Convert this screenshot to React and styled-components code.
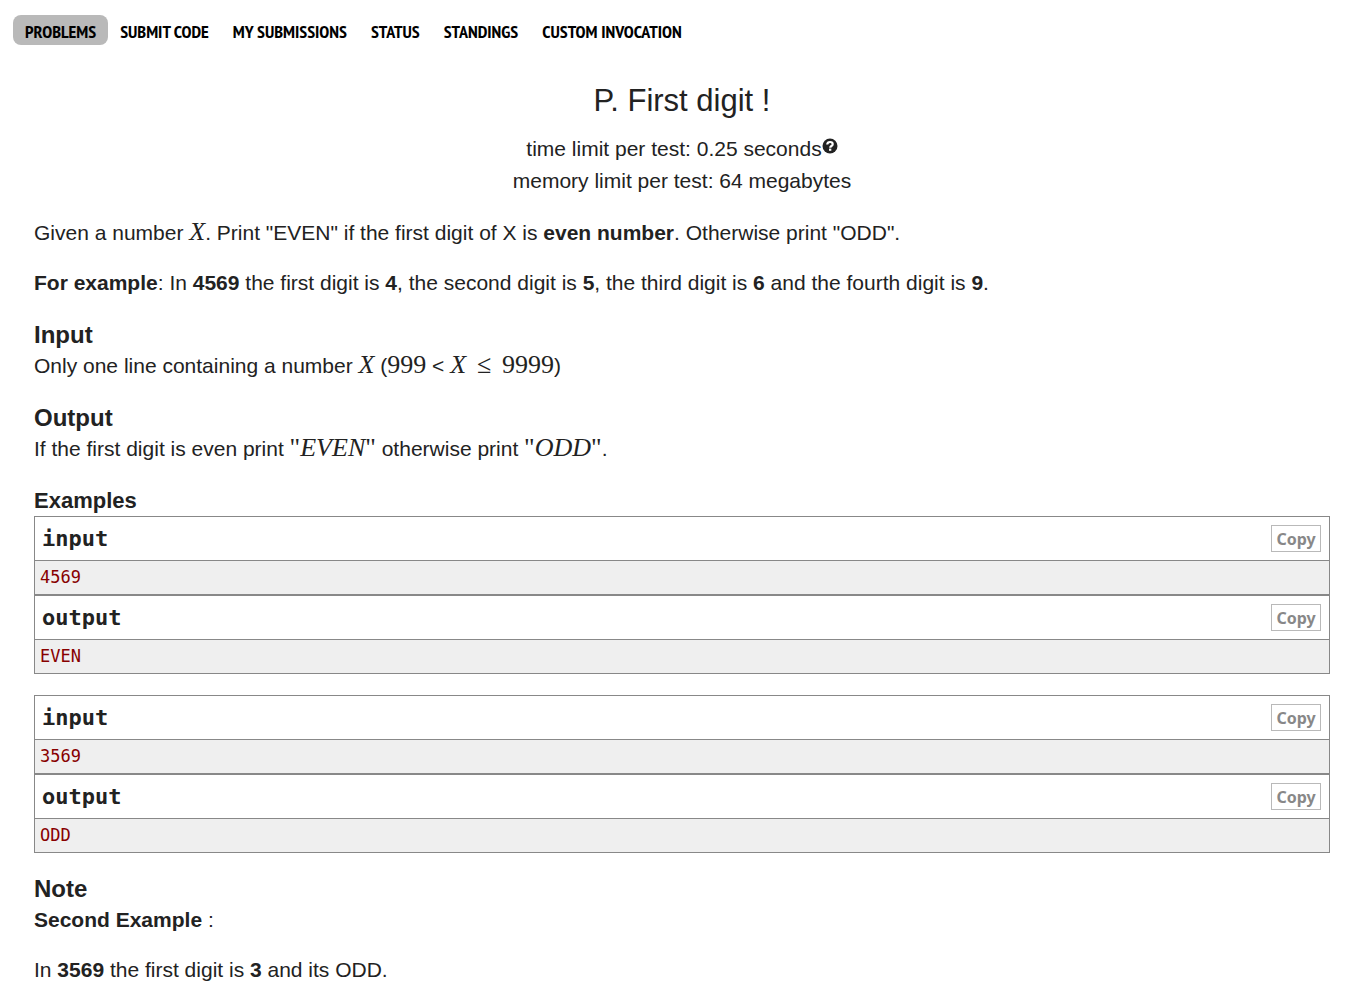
import React from "react";
import styled, { createGlobalStyle } from "styled-components";

const SANS = '"Liberation Sans", Arial, sans-serif';
const SERIF = '"Liberation Serif", "Times New Roman", serif';
const MONO = 'Consolas, "DejaVu Sans Mono", monospace';
const NARROW = '"PT Sans Narrow", "Liberation Sans Narrow", "Open Sans Condensed", "Liberation Sans", sans-serif';

const GlobalStyle = createGlobalStyle`
  * { box-sizing: border-box; }
  body {
    margin: 0;
    background: #fff;
    color: #222;
    font: 21px/32px ${SANS};
  }
`;

const Nav = styled.nav`
  padding: 15px 13px 0;
`;

const NavList = styled.ul`
  display: flex;
  flex-wrap: wrap;
  margin: 0;
  padding: 0;
  list-style: none;
`;

const NavLink = styled.a`
  display: block;
  height: 30px;
  padding: 1px 12px 0;
  border-radius: 8px;
  background: ${(p) => (p.$active ? "#b9b9b9" : "transparent")};
  color: #000;
  font: bold 18px/32px ${NARROW};
  text-decoration: none;
  white-space: nowrap;
`;

const Statement = styled.main`
  padding: 32px 30px 10px 34px;
`;

const Header = styled.header`
  margin-bottom: 20px;
  text-align: center;
`;

const Title = styled.h1`
  margin: 0 0 8px;
  font-size: 31px;
  font-weight: normal;
  line-height: 48px;
`;

const HelpLink = styled.a`
  display: inline-block;
  color: #222;
  line-height: 16px;
  vertical-align: 2px;

  svg { display: block; }
`;

const Section = styled.section`
  margin-bottom: 21px;
`;

const Heading = styled.h2`
  margin: 0;
  font-size: ${(p) => (p.$small ? "22px" : "24px")};
  line-height: 30px;
`;

const Text = styled.p`
  margin: 0;

  & + & { margin-top: 18px; }
`;

const MathText = styled.span`
  font-family: ${SERIF};
  font-size: 26px;
  font-style: ${(p) => (p.$upright ? "normal" : "italic")};
  line-height: 30px;
`;

const Relation = styled(MathText)`
  margin: 0 5px;
`;

const Sample = styled.div`
  & + & { margin-top: 21px; }
`;

const Block = styled.div`
  border: 1px solid #888;
`;

const BlockTitle = styled.div`
  display: flex;
  align-items: center;
  justify-content: space-between;
  height: 44px;
  padding: 0 8px 0 7px;
  border-bottom: 1px solid #888;
`;

const BlockName = styled.h3`
  margin: 0;
  font: bold 22px/32px ${MONO};
`;

const CopyButton = styled.button`
  min-width: 50px;
  height: 27px;
  padding: 0 4px;
  border: 1px solid #b9b9b9;
  background: #fff;
  color: #888;
  font: bold 16px/24px "Noto Sans", sans-serif;
  cursor: pointer;
`;

const Data = styled.pre`
  margin: 0;
  padding: 0 5px;
  background: #efefef;
  color: #880000;
  font: 17px/33px ${MONO};
`;

const NAV = ["Problems", "Submit Code", "My Submissions", "Status", "Standings", "Custom Invocation"];

const SAMPLES = [
  { input: "4569", output: "EVEN" },
  { input: "3569", output: "ODD" },
];

function HelpIcon() {
  return (
    <svg width="16" height="16" viewBox="0 0 16 16" aria-hidden="true">
      <circle cx="8" cy="8" r="7.500" fill="#222" />
      <path d="M5.200 6.500C5.400 4.700 6.600 4 8 4c1.600 0 2.700.8 2.700 2.200 0 1.900-2.500 1.700-2.500 3.500" fill="none" stroke="#fff" strokeWidth="2.200" />
      <rect x="7" y="10.600" width="2.300" height="2.200" fill="#fff" />
    </svg>
  );
}

function SampleBlock({ name, data }) {
  return (
    <Block>
      <BlockTitle>
        <BlockName>{name}</BlockName>
        <CopyButton type="button">Copy</CopyButton>
      </BlockTitle>
      <Data>{data}</Data>
    </Block>
  );
}

function QuotedMath({ children }) {
  return (
    <MathText $upright>
      "<MathText>{children}</MathText>"
    </MathText>
  );
}

export default function App() {
  return (
    <>
      <GlobalStyle />
      <Nav>
        <NavList>
          {NAV.map((label, i) => (
            <li key={label}>
              <NavLink href="#" $active={i === 0}>{label.toUpperCase()}</NavLink>
            </li>
          ))}
        </NavList>
      </Nav>
      <Statement>
        <Header>
          <Title>P. First digit !</Title>
          <div>
            time limit per test: 0.25 seconds
            <HelpLink href="#" aria-label="Help"><HelpIcon /></HelpLink>
          </div>
          <div>memory limit per test: 64 megabytes</div>
        </Header>
        <Section>
          <Text>
            Given a number <MathText>X</MathText>. Print "EVEN" if the first digit of X is <b>even number</b>. Otherwise print "ODD".
          </Text>
          <Text>
            <b>For example</b>: In <b>4569</b> the first digit is <b>4</b>, the second digit is <b>5</b>, the third digit is <b>6</b> and the fourth digit is <b>9</b>.
          </Text>
        </Section>
        <Section>
          <Heading>Input</Heading>
          <Text>
            Only one line containing a number <MathText>X</MathText> (<MathText $upright>999</MathText> &lt; <MathText>X</MathText> <Relation $upright>≤</Relation> <MathText $upright>9999</MathText>)
          </Text>
        </Section>
        <Section>
          <Heading>Output</Heading>
          <Text>
            If the first digit is even print <QuotedMath>EVEN</QuotedMath> otherwise print <QuotedMath>ODD</QuotedMath>.
          </Text>
        </Section>
        <Section>
          <Heading $small>Examples</Heading>
          {SAMPLES.map((s) => (
            <Sample key={s.input}>
              <SampleBlock name="input" data={s.input} />
              <SampleBlock name="output" data={s.output} />
            </Sample>
          ))}
        </Section>
        <section>
          <Heading>Note</Heading>
          <Text><b>Second Example</b> :</Text>
          <Text>In <b>3569</b> the first digit is <b>3</b> and its ODD.</Text>
        </section>
      </Statement>
    </>
  );
}
